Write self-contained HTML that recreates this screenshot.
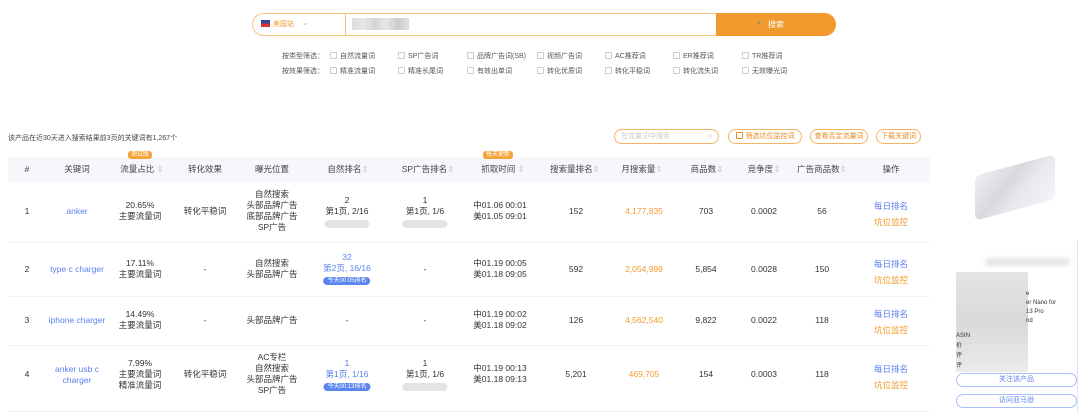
<!DOCTYPE html>
<html><head><meta charset="utf-8"><style>
*{margin:0;padding:0;box-sizing:border-box}
body{width:1080px;height:414px;background:#fff;position:relative;overflow:hidden;font-family:"Liberation Sans","Noto Sans CJK SC",sans-serif;color:#333;font-size:8px}
.a{position:absolute;white-space:nowrap}
.c{position:absolute;text-align:center;transform:translateX(-50%);white-space:nowrap;line-height:11px;font-size:8.5px}
.cb{display:inline-block;width:7px;height:7px;border:1px solid #ccc;border-radius:1px;vertical-align:-1px;margin-right:3px}
.blue{color:#5b7ff0}.or{color:#f39a2e}
.tag{display:inline-block;font-size:6px;line-height:8px;padding:0 4px;border-radius:5px;background:#e4e4e4;color:#e4e4e4}
.tagb{background:#5b85f0;color:#fff}
.hd{font-size:8.5px;color:#444}
.sep{position:absolute;left:8px;width:922px;height:1px;background:#eef0f3}
.ob{position:absolute;border:1px solid #f5b461;border-radius:8px;color:#e78a1f;font-size:7px;text-align:center;line-height:13px;height:15px}
</style></head><body>
<!-- search bar -->
<div class="a" style="left:252px;top:13px;width:584px;height:23px;border:1.5px solid #f8c27a;border-radius:12px;background:#fff"></div>
<div class="a" style="left:716px;top:13px;width:120px;height:23px;background:#f39a2e;border-radius:0 12px 12px 0;color:#fff;text-align:center;line-height:23px;font-size:8px">搜索</div>
<div class="a" style="left:261px;top:20px;width:9px;height:7px;background:linear-gradient(#2e4a9e 0 50%,#d33 50%)"></div>
<div class="a" style="left:273px;top:19px;color:#f39a2e;font-size:7px">美国站</div>
<div class="a" style="left:302px;top:18px;color:#bbb;font-size:8px">⌄</div>
<div class="a" style="left:345px;top:14px;width:1px;height:21px;background:#f8c27a"></div>
<div class="a" style="left:352px;top:18px;width:57px;height:12px;background:linear-gradient(90deg,#ddd,#e8e8e8,#d4d4d4,#e6e6e6,#ccc,#e0e0e0)"></div>
<div class="a" style="left:756px;top:18px;color:#888;font-size:9px">×</div>
<!-- filters -->
<div class="a" style="left:282px;top:51px;font-size:7px;color:#555">按类型筛选：</div>
<div class="a" style="left:282px;top:66px;font-size:7px;color:#555">按效果筛选：</div>
<div class="a" style="left:330px;top:51px;font-size:7px;color:#555"><span class="cb"></span>自然流量词</div>
<div class="a" style="left:398px;top:51px;font-size:7px;color:#555"><span class="cb"></span>SP广告词</div>
<div class="a" style="left:467px;top:51px;font-size:7px;color:#555"><span class="cb"></span>品牌广告词(SB)</div>
<div class="a" style="left:537px;top:51px;font-size:7px;color:#555"><span class="cb"></span>视频广告词</div>
<div class="a" style="left:605px;top:51px;font-size:7px;color:#555"><span class="cb"></span>AC推荐词</div>
<div class="a" style="left:673px;top:51px;font-size:7px;color:#555"><span class="cb"></span>ER推荐词</div>
<div class="a" style="left:742px;top:51px;font-size:7px;color:#555"><span class="cb"></span>TR推荐词</div>
<div class="a" style="left:330px;top:66px;font-size:7px;color:#555"><span class="cb"></span>精准流量词</div>
<div class="a" style="left:398px;top:66px;font-size:7px;color:#555"><span class="cb"></span>精准长尾词</div>
<div class="a" style="left:467px;top:66px;font-size:7px;color:#555"><span class="cb"></span>有效出单词</div>
<div class="a" style="left:537px;top:66px;font-size:7px;color:#555"><span class="cb"></span>转化优质词</div>
<div class="a" style="left:605px;top:66px;font-size:7px;color:#555"><span class="cb"></span>转化平稳词</div>
<div class="a" style="left:673px;top:66px;font-size:7px;color:#555"><span class="cb"></span>转化流失词</div>
<div class="a" style="left:742px;top:66px;font-size:7px;color:#555"><span class="cb"></span>无效曝光词</div>
<!-- summary / tools -->
<div class="a" style="left:8px;top:133px;font-size:7px;color:#444">该产品在近30天进入搜索结果前3页的关键词有1,267个</div>
<div class="ob" style="left:614px;top:129px;width:105px;text-align:left;padding-left:6px;color:#ccc">在流量词中搜索<span style="position:absolute;right:6px;color:#e78a1f">○</span></div>
<div class="ob" style="left:728px;top:129px;width:74px"><span class="cb" style="border-color:#e78a1f"></span>筛选坑位监控词</div>
<div class="ob" style="left:810px;top:129px;width:58px">查看否定流量词</div>
<div class="ob" style="left:876px;top:129px;width:45px">下载关键词</div>
<!-- header -->
<div class="a" style="left:8px;top:157px;width:922px;height:25px;background:#f5f7fa"></div>
<div class="a" style="left:128px;top:151px;background:#f5a338;color:#fff;font-size:6px;padding:0 3px;border-radius:3px;line-height:8px">测试版</div>
<div class="a" style="left:483px;top:151px;background:#f5a338;color:#fff;font-size:6px;padding:0 3px;border-radius:3px;line-height:8px">每天更新</div>
<div class="c hd" style="left:27px;top:164px">#</div>
<div class="c hd" style="left:77px;top:164px">关键词</div>
<div class="c hd" style="left:142px;top:164px">流量占比 <span style="color:#ccc">⇕</span></div>
<div class="c hd" style="left:205px;top:164px">转化效果</div>
<div class="c hd" style="left:272px;top:164px">曝光位置</div>
<div class="c hd" style="left:348px;top:164px">自然排名<span style="color:#ccc">⇕</span></div>
<div class="c hd" style="left:428px;top:164px">SP广告排名<span style="color:#ccc">⇕</span></div>
<div class="c hd" style="left:503px;top:164px">抓取时间 <span style="color:#ccc">⇕</span></div>
<div class="c hd" style="left:575px;top:164px">搜索量排名<span style="color:#ccc">⇕</span></div>
<div class="c hd" style="left:642px;top:164px">月搜索量<span style="color:#ccc">⇕</span></div>
<div class="c hd" style="left:707px;top:164px">商品数<span style="color:#ccc">⇕</span></div>
<div class="c hd" style="left:764px;top:164px">竞争度<span style="color:#ccc">⇕</span></div>
<div class="c hd" style="left:822px;top:164px">广告商品数<span style="color:#ccc">⇕</span></div>
<div class="c hd" style="left:891px;top:164px">操作</div>
<!-- row1 -->
<div class="c" style="left:27px;top:206px">1</div>
<div class="c blue" style="left:77px;top:206px">anker</div>
<div class="c" style="left:140px;top:200px">20.65%<br>主要流量词</div>
<div class="c" style="left:205px;top:206px">转化平稳词</div>
<div class="c" style="left:272px;top:189px">自然搜索<br>头部品牌广告<br>底部品牌广告<br>SP广告</div>
<div class="c" style="left:347px;top:195px">2<br>第1页, 2/16<br><span class="tag">01月06日排名</span></div>
<div class="c" style="left:425px;top:195px">1<br>第1页, 1/6<br><span class="tag">01月04日排名</span></div>
<div class="c" style="left:500px;top:200px">中01.06 00:01<br>美01.05 09:01</div>
<div class="c" style="left:576px;top:206px">152</div>
<div class="c or" style="left:644px;top:206px">4,177,835</div>
<div class="c" style="left:706px;top:206px">703</div>
<div class="c" style="left:764px;top:206px">0.0002</div>
<div class="c" style="left:822px;top:206px">56</div>
<div class="c" style="left:891px;top:198px;line-height:16px"><span class="blue">每日排名</span><br><span class="or">坑位监控</span></div>
<div class="sep" style="top:242px"></div>
<!-- row2 -->
<div class="c" style="left:27px;top:264px">2</div>
<div class="c blue" style="left:77px;top:264px">type c charger</div>
<div class="c" style="left:140px;top:258px">17.11%<br>主要流量词</div>
<div class="c" style="left:205px;top:264px">-</div>
<div class="c" style="left:272px;top:258px">自然搜索<br>头部品牌广告</div>
<div class="c blue" style="left:347px;top:252px">32<br>第2页, 16/16<br><span class="tag tagb">今天00:05排名</span></div>
<div class="c" style="left:425px;top:264px">-</div>
<div class="c" style="left:500px;top:258px">中01.19 00:05<br>美01.18 09:05</div>
<div class="c" style="left:576px;top:264px">592</div>
<div class="c or" style="left:644px;top:264px">2,054,999</div>
<div class="c" style="left:706px;top:264px">5,854</div>
<div class="c" style="left:764px;top:264px">0.0028</div>
<div class="c" style="left:822px;top:264px">150</div>
<div class="c" style="left:891px;top:256px;line-height:16px"><span class="blue">每日排名</span><br><span class="or">坑位监控</span></div>
<div class="sep" style="top:296px"></div>
<!-- row3 -->
<div class="c" style="left:27px;top:315px">3</div>
<div class="c blue" style="left:77px;top:315px">iphone charger</div>
<div class="c" style="left:140px;top:309px">14.49%<br>主要流量词</div>
<div class="c" style="left:205px;top:315px">-</div>
<div class="c" style="left:272px;top:315px">头部品牌广告</div>
<div class="c" style="left:347px;top:315px">-</div>
<div class="c" style="left:425px;top:315px">-</div>
<div class="c" style="left:500px;top:309px">中01.19 00:02<br>美01.18 09:02</div>
<div class="c" style="left:576px;top:315px">126</div>
<div class="c or" style="left:644px;top:315px">4,562,540</div>
<div class="c" style="left:706px;top:315px">9,822</div>
<div class="c" style="left:764px;top:315px">0.0022</div>
<div class="c" style="left:822px;top:315px">118</div>
<div class="c" style="left:891px;top:306px;line-height:16px"><span class="blue">每日排名</span><br><span class="or">坑位监控</span></div>
<div class="sep" style="top:345px"></div>
<!-- row4 -->
<div class="c" style="left:27px;top:369px">4</div>
<div class="c blue" style="left:77px;top:364px">anker usb c<br>charger</div>
<div class="c" style="left:140px;top:358px">7.99%<br>主要流量词<br>精准流量词</div>
<div class="c" style="left:205px;top:369px">转化平稳词</div>
<div class="c" style="left:272px;top:352px">AC专栏<br>自然搜索<br>头部品牌广告<br>SP广告</div>
<div class="c blue" style="left:347px;top:358px">1<br>第1页, 1/16<br><span class="tag tagb">今天00:13排名</span></div>
<div class="c" style="left:425px;top:358px">1<br>第1页, 1/6<br><span class="tag">01月04日排名</span></div>
<div class="c" style="left:500px;top:363px">中01.19 00:13<br>美01.18 09:13</div>
<div class="c" style="left:576px;top:369px">5,201</div>
<div class="c or" style="left:644px;top:369px">469,705</div>
<div class="c" style="left:706px;top:369px">154</div>
<div class="c" style="left:764px;top:369px">0.0003</div>
<div class="c" style="left:822px;top:369px">118</div>
<div class="c" style="left:891px;top:361px;line-height:16px"><span class="blue">每日排名</span><br><span class="or">坑位监控</span></div>
<div class="sep" style="top:411px"></div>
<!-- right panel -->
<div class="a" style="left:975px;top:165px;width:80px;height:45px;background:linear-gradient(135deg,#eceef2,#d8d9dc 40%,#e6e8ec 60%,#f4f5f7);border-radius:6px;transform:skewY(-15deg)"></div>
<div class="a" style="left:985px;top:258px;width:85px;height:8px;background:#e6e6e6;border-radius:4px;filter:blur(2px)"></div>
<div class="a" style="left:956px;top:272px;width:72px;height:100px;background:linear-gradient(#e4e4e4,#d9d9d9 50%,#ebebeb)"></div>
<div class="a" style="left:1026px;top:290px;font-size:6px;line-height:9px;color:#333">e<br>er Nano for<br>13 Pro<br>nd</div>
<div class="a" style="left:956px;top:331px;font-size:6px;line-height:10px;color:#333">ASIN<br>价<br>评<br>评</div>
<div class="a" style="left:1077px;top:240px;width:1px;height:174px;background:#e0e4ee"></div>
<div class="a" style="left:956px;top:373px;width:121px;height:14px;border:1px solid #a9bff5;border-radius:7px;text-align:center;line-height:12px;font-size:7px;color:#5b7ff0">关注该产品</div>
<div class="a" style="left:956px;top:394px;width:121px;height:14px;border:1px solid #a9bff5;border-radius:7px;text-align:center;line-height:12px;font-size:7px;color:#5b7ff0">访问亚马逊</div>
</body></html>
